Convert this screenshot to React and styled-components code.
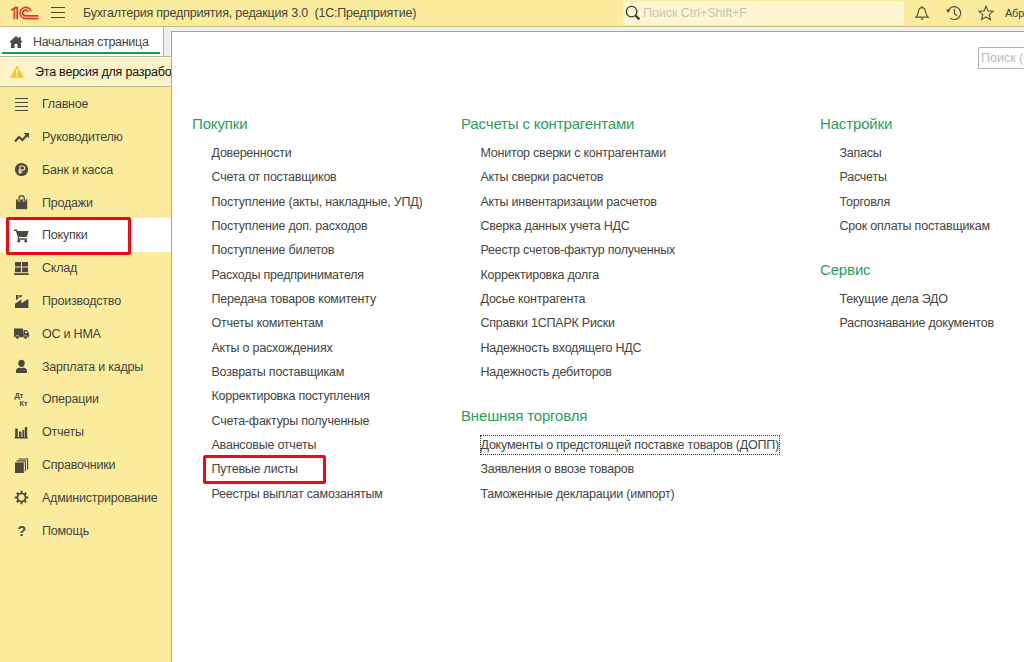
import React from "react";
import styled, { createGlobalStyle } from "styled-components";

const ink = "#4a4840";

const icons = {
  main: (
    <path d="M1 1.5h13M1 5.5h13M1 9.5h13M1 13.5h13" stroke={ink} strokeWidth="1" fill="none" />
  ),
  manager: (
    <>
      <path d="M1 11.5L5 7l3.5 3L13 5" fill="none" stroke={ink} strokeWidth="2" />
      <path d="M9.5 3H15v5.2z" />
    </>
  ),
  bank: (
    <>
      <circle cx="7.5" cy="7.5" r="6.6" />
      <path
        d="M6 12V4h2.6a2 2 0 0 1 0 4.2H4.4M4.4 10.2H8.4"
        fill="none"
        stroke="#f0e6a8"
        strokeWidth="1.2"
      />
    </>
  ),
  sales: (
    <>
      <path d="M2 4.4h11.2v9.8H2z" />
      <path d="M5 7V2.9a2.6 2.3 0 0 1 5.2 0V7" fill="none" stroke="#faec9c" strokeWidth="2.4" />
      <path d="M5 7V2.9a2.6 2.3 0 0 1 5.2 0V7" fill="none" stroke={ink} strokeWidth="1.2" />
    </>
  ),
  purchases: (
    <>
      <path d="M0 1.6h2.8l.6 1.4H14.8l-2.2 6H5.2l-.4 1.2H13v1.5H3.4l.5-2.8L1.9 3H0z" />
      <circle cx="4.8" cy="13.2" r="1.4" />
      <circle cx="11.8" cy="13.2" r="1.4" />
    </>
  ),
  stock: <path d="M1 1h6v4.6H1zM8 1h6v4.6H8zM1 6.6h6v4.6H1zM8 6.6h6v4.6H8zM0 12.2h14.6V14H0z" />,
  production: <path d="M1 14V9.8L7.4 5.6v3.6L14.4 4.8V14zM2 1h2.4v3.4L2 6.2zM5.4 1h2.4v1.4L5.4 4z" />,
  assets: (
    <>
      <path d="M0 2.4h9v8.8H0zM9.6 4h3.2l2.2 3.2v4H9z" />
      <path d="M11 5.2h1.3l1.200 1.900H11z" fill="#faec9c" />
      <circle cx="3.400" cy="11.200" r="1.900" stroke="#faec9c" strokeWidth=".6" />
      <circle cx="11.600" cy="11.200" r="1.900" stroke="#faec9c" strokeWidth=".6" />
    </>
  ),
  salary: (
    <path d="M7.5.8c2.1 0 3.2 1.4 3.2 3.4S9.4 8 7.5 8 4.3 6.2 4.3 4.2 5.4.8 7.5.8zM2 14v-2.3c0-1.8 1.6-2.8 3.8-3.2.9.9 2.5.9 3.4 0 2.2.4 3.8 1.4 3.8 3.2V14z" />
  ),
  operations: (
    <g fontFamily="Liberation Sans, sans-serif" fontWeight="700" fontSize="7.4">
      <text x="0.6" y="5.6">Дт</text>
      <text x="5.6" y="14">Кт</text>
    </g>
  ),
  reports: <path d="M1.2 3.6h2.6V12H1.2zM5 6.4h2.4V12H5zM8.4 5h1.8v7H8.4zM10.8 2h2.4v10h-2.4zM.6 12h13.2v1.4H.6z" />,
  catalogs: (
    <>
      <path d="M1 4.4h8.8V15H1z" />
      <path d="M2.6 2.9h8.8v10.4M4.6 1h9v10.4" fill="none" stroke={ink} strokeWidth="1.1" />
    </>
  ),
  admin: (
    <>
      <circle cx="7.5" cy="7.5" r="4" fill="none" stroke={ink} strokeWidth="1.7" />
      <path
        d="M7.5 3.5V.8M7.5 14.2v-2.7M3.5 7.5H.8M14.2 7.5h-2.7M4.7 4.7L2.8 2.8M12.2 12.2l-1.9-1.9M4.7 10.3l-1.9 1.9M12.2 2.8l-1.9 1.9"
        stroke={ink}
        strokeWidth="2"
      />
    </>
  ),
  help: (
    <text x="3.6" y="13" fontFamily="Liberation Sans, sans-serif" fontWeight="700" fontSize="14">
      ?
    </text>
  ),
};

const sections = [
  { icon: "main", label: "Главное" },
  { icon: "manager", label: "Руководителю" },
  { icon: "bank", label: "Банк и касса" },
  { icon: "sales", label: "Продажи" },
  { icon: "purchases", label: "Покупки", active: true },
  { icon: "stock", label: "Склад" },
  { icon: "production", label: "Производство" },
  { icon: "assets", label: "ОС и НМА" },
  { icon: "salary", label: "Зарплата и кадры" },
  { icon: "operations", label: "Операции" },
  { icon: "reports", label: "Отчеты" },
  { icon: "catalogs", label: "Справочники" },
  { icon: "admin", label: "Администрирование" },
  { icon: "help", label: "Помощь" },
];

const columns = [
  [
    {
      title: "Покупки",
      links: [
        "Доверенности",
        "Счета от поставщиков",
        "Поступление (акты, накладные, УПД)",
        "Поступление доп. расходов",
        "Поступление билетов",
        "Расходы предпринимателя",
        "Передача товаров комитенту",
        "Отчеты комитентам",
        "Акты о расхождениях",
        "Возвраты поставщикам",
        "Корректировка поступления",
        "Счета-фактуры полученные",
        "Авансовые отчеты",
        "Путевые листы",
        "Реестры выплат самозанятым",
      ],
    },
  ],
  [
    {
      title: "Расчеты с контрагентами",
      links: [
        "Монитор сверки с контрагентами",
        "Акты сверки расчетов",
        "Акты инвентаризации расчетов",
        "Сверка данных учета НДС",
        "Реестр счетов-фактур полученных",
        "Корректировка долга",
        "Досье контрагента",
        "Справки 1СПАРК Риски",
        "Надежность входящего НДС",
        "Надежность дебиторов",
      ],
    },
    {
      title: "Внешняя торговля",
      links: [
        "Документы о предстоящей поставке товаров (ДОПП)",
        "Заявления о ввозе товаров",
        "Таможенные декларации (импорт)",
      ],
    },
  ],
  [
    { title: "Настройки", links: ["Запасы", "Расчеты", "Торговля", "Срок оплаты поставщикам"] },
    { title: "Сервис", links: ["Текущие дела ЭДО", "Распознавание документов"] },
  ],
];

const marked = "Путевые листы";
const focused = "Документы о предстоящей поставке товаров (ДОПП)";

const Logo = () => (
  <svg width="30" height="16" viewBox="0 0 30 16" fill="none" stroke="#d93a2b" strokeWidth="1.7">
    <path d="M1.2 5.2L4.4 3V14.200M7.200 14.200V2.600H4.600" />
    <path d="M21 6.200A5.600 5.600 0 1 0 15.800 13.600H28.400" />
    <path d="M18.400 7A2.900 2.900 0 1 0 15.800 10.900H28.400" />
  </svg>
);

const NavItem = ({ icon, label, active }) => (
  <NavItemStyled $active={active}>
    <NavIcon viewBox="0 0 15 15">{icons[icon]}</NavIcon>
    {label}
    {active && <NavMark />}
  </NavItemStyled>
);

const Group = ({ title, links }) => (
  <GroupStyled>
    <GroupTitle>{title}</GroupTitle>
    {links.map((link) => (
      <LinkRow key={link}>
        <LinkText $focused={link === focused}>{link}</LinkText>
        {link === marked && <LinkMark />}
      </LinkRow>
    ))}
  </GroupStyled>
);

const App = () => (
  <Window>
    <GlobalStyle />
    <TopBar>
      <Logo />
      <MenuIcon viewBox="0 0 14 12">
        <path d="M0 .5h14M0 5.5h14M0 10.500h14" stroke="#4c4836" strokeWidth="1" />
      </MenuIcon>
      <AppTitle>Бухгалтерия предприятия, редакция 3.0&nbsp; (1С:Предприятие)</AppTitle>
      <GlobalSearch>
        <svg width="16" height="16" viewBox="0 0 16 16" fill="none" stroke="#3d3a2c">
          <circle cx="6.6" cy="6.6" r="5.3" strokeWidth="1.3" />
          <path d="M10.6 10.6L14.4 14.4" strokeWidth="2.2" />
        </svg>
        <span>Поиск Ctrl+Shift+F</span>
      </GlobalSearch>
      <Tools>
        <svg width="16" height="16" viewBox="0 0 16 16" fill="none" stroke="#55503a" strokeWidth="1.2">
          <path d="M1.8 12.2h12.4C12 10 11.9 8.6 11.5 6.5 11.1 4 10 2.7 8 2.7S4.9 4 4.5 6.5C4.1 8.6 4 10 1.8 12.2z" />
          <path d="M8 1v1.7" />
          <path d="M6.2 13.6h3.6L8 15.2z" fill="#55503a" stroke="none" />
        </svg>
        <svg width="16" height="16" viewBox="0 0 16 16" fill="none" stroke="#55503a" strokeWidth="1.2">
          <path d="M2.2 6A6.4 6.4 0 1 1 4.3 13.1" />
          <path d="M8.4 4v4.4l2.6 2.4" />
          <path d="M0 4.6l4.6.2L2 8z" fill="#55503a" stroke="none" />
        </svg>
        <svg width="16" height="16" viewBox="0 0 16 16" fill="none" stroke="#55503a" strokeWidth="1.1">
          <path d="M8 1.2l2 4.7 5.2.4-4 3.4 1.3 5L8 12l-4.5 2.7 1.3-5-4-3.4 5.2-.4z" />
        </svg>
      </Tools>
      <UserName>Абр</UserName>
    </TopBar>
    <Body>
      <Side>
        <TabStrip>
          <Tab>
            <svg width="14" height="12" viewBox="0 0 14 12" fill="#4c4c4c">
              <path d="M7 0L0 6.2h2V12h3.6V8h2.8v4H12V6.2h2L11.8 4.2V1H10v1.6z" />
            </svg>
            Начальная страница
          </Tab>
        </TabStrip>
        <Notice>
          <svg width="14" height="13" viewBox="0 0 14 13">
            <path d="M7 .3L13.8 12.8H.2z" fill="#f5c62c" />
            <path d="M7 4.2v4.3M7 9.8v1.5" stroke="#fff" strokeWidth="1.5" />
          </svg>
          Эта версия для разрабо
        </Notice>
        <Nav>
          {sections.map((section) => (
            <NavItem key={section.label} {...section} />
          ))}
        </Nav>
      </Side>
      <Panel>
        <PanelSearch>Поиск (Ctrl+F)</PanelSearch>
        <Columns>
          {columns.map((groups) => (
            <Column key={groups[0].title}>
              {groups.map((group) => (
                <Group key={group.title} {...group} />
              ))}
            </Column>
          ))}
        </Columns>
      </Panel>
    </Body>
  </Window>
);

const GlobalStyle = createGlobalStyle`
  body {
    margin: 0;
    overflow: hidden;
    font-family: "Liberation Sans", Arial, sans-serif;
    font-size: 12.5px;
    letter-spacing: -0.22px;
    color: #444440;
  }

  * {
    box-sizing: border-box;
  }

  svg {
    flex: none;
  }
`;

const Window = styled.div`
  width: 1024px;
  height: 662px;
  display: flex;
  flex-direction: column;
  overflow: hidden;
  background: #f0f0f0;
`;

const TopBar = styled.header`
  flex: none;
  height: 27px;
  display: flex;
  align-items: center;
  padding: 0 0 1px 10px;
  background: #faec9c;
  border-bottom: 1px solid #c9bd7c;
  white-space: nowrap;
  overflow: hidden;
`;

const MenuIcon = styled.svg`
  width: 14px;
  height: 12px;
  margin-left: 11px;
`;

const AppTitle = styled.div`
  flex: none;
  width: 558px;
  padding-left: 18px;
  letter-spacing: -0.2px;
`;

const GlobalSearch = styled.div`
  flex: none;
  width: 281px;
  height: 24px;
  display: flex;
  align-items: center;
  gap: 2px;
  padding-left: 2px;
  border-radius: 3px;
  background: #fef5d2;
  color: #c8c3b2;
  letter-spacing: -0.05px;
`;

const Tools = styled.div`
  flex: none;
  display: flex;
  gap: 16px;
  margin-left: 10px;
`;

const UserName = styled.div`
  margin-left: 11px;
  font-size: 11px;
`;

const Body = styled.div`
  flex: 1;
  min-height: 0;
  display: flex;
`;

const Side = styled.aside`
  flex: none;
  width: 171px;
  display: flex;
  flex-direction: column;
`;

const TabStrip = styled.div`
  height: 29px;
  flex: none;
  background: #f0f0f0;
`;

const Tab = styled.div`
  position: relative;
  width: 164px;
  height: 29px;
  display: flex;
  align-items: center;
  gap: 10px;
  padding-left: 9px;
  background: #fff;
  border-right: 1px solid #b4b4b4;
  white-space: nowrap;
  letter-spacing: -0.3px;

  &::after {
    content: "";
    position: absolute;
    left: 2px;
    right: 3px;
    bottom: 2px;
    height: 2px;
    background: #159a55;
  }
`;

const Notice = styled.div`
  flex: none;
  height: 31px;
  display: flex;
  align-items: center;
  gap: 11px;
  padding-left: 10px;
  border-top: 1px solid #bdb89c;
  border-bottom: 1px solid #bdb89c;
  background: #fdf2c8;
  color: #111;
  white-space: nowrap;
`;

const Nav = styled.nav`
  flex: 1;
  padding-top: 0.9px;
  background: #faec9c;
`;

const NavItemStyled = styled.div`
  position: relative;
  height: ${(props) => (props.$active ? "34px" : "32.8px")};
  margin: ${(props) => (props.$active ? "-0.8px 0 -0.4px" : "0")};
  display: flex;
  align-items: center;
  gap: 13px;
  padding-left: 14px;
  background: ${(props) => (props.$active ? "#fff" : "transparent")};
`;

const NavIcon = styled.svg`
  width: 15px;
  height: 15px;
  fill: ${ink};
`;

const NavMark = styled.span`
  position: absolute;
  left: 6px;
  top: -1px;
  width: 125px;
  height: 38px;
  border: 3px solid #ee0a12;
  border-radius: 2px;
`;

const Panel = styled.main`
  flex: 1;
  min-width: 0;
  margin-top: 4px;
  display: flex;
  flex-direction: column;
  border-top: 1px solid #a6a6a6;
  border-left: 1px solid #a6a6a6;
  background: #fff;
  overflow: hidden;
`;

const PanelSearch = styled.div`
  flex: none;
  align-self: flex-end;
  width: 46px;
  height: 22px;
  margin-top: 15px;
  padding-left: 2px;
  line-height: 21px;
  border: 1px solid #b0b0b0;
  border-right: 0;
  border-radius: 2px 0 0 2px;
  color: #b9b9b9;
  letter-spacing: 0;
  white-space: nowrap;
  overflow: hidden;
`;

const Columns = styled.div`
  display: grid;
  grid-template-columns: 269px 359px 204px;
  padding: 42px 0 0 20px;
`;

const Column = styled.div`
  display: flex;
  flex-direction: column;
  gap: 18.6px;
`;

const GroupStyled = styled.section`
  white-space: nowrap;
`;

const GroupTitle = styled.h2`
  height: 30px;
  margin: 0;
  line-height: 25px;
  font-size: 15px;
  font-weight: 400;
  letter-spacing: -0.15px;
  color: #2a9d5c;
`;

const LinkRow = styled.div`
  position: relative;
  height: 24.35px;
  padding-left: 19.5px;
  line-height: 24px;
`;

const LinkText = styled.a`
  display: inline-block;
  height: 18px;
  line-height: 18px;
  outline: ${(props) => (props.$focused ? "1px dotted #333" : "none")};
  outline-offset: 0.5px;
`;

const LinkMark = styled.span`
  position: absolute;
  left: 11px;
  top: -2px;
  width: 123px;
  height: 29px;
  border: 3px solid #ee0a12;
  border-radius: 2px;
`;

export default App;
